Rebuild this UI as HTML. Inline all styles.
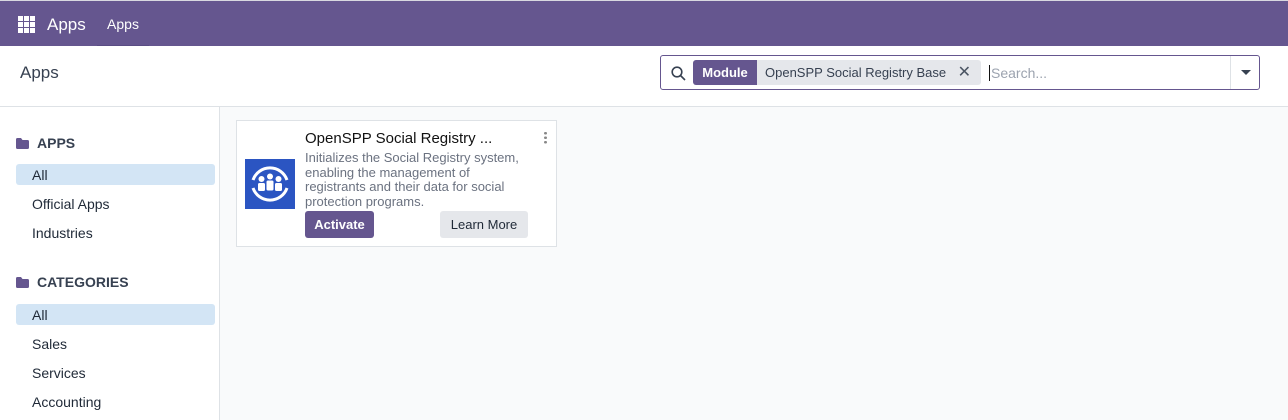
<!DOCTYPE html>
<html><head><meta charset="utf-8"><style>
*{box-sizing:border-box;margin:0;padding:0}
body{width:1288px;height:420px;overflow:hidden;font-family:"Liberation Sans",sans-serif;background:#f9fafb;color:#111827;position:relative}
.nav{position:absolute;left:0;top:0;width:1288px;height:46px;background:#65568f;border-top:1px solid #d8d8e0}
.nav .t{position:absolute;left:47px;top:14px;color:#fff;font-size:17px}
.nav .m{position:absolute;left:97px;top:0;width:52px;height:45px;color:#fff;font-size:14px;text-align:center;line-height:46px;border-bottom:1px solid #5a4c84}
.cp{position:absolute;left:0;top:46px;width:1288px;height:61px;background:#fff;border-bottom:1px solid #dee2e6}
.cp .t{position:absolute;left:20px;top:17px;font-size:17px;color:#374151}
.sb{position:absolute;left:660px;top:9px;width:600px;height:35px;border:1px solid #65568f;border-radius:3px;background:#fff}
.side{position:absolute;left:0;top:107px;width:220px;height:313px;background:#fff;border-right:1px solid #dee2e6}
.h{position:absolute;left:16px;font-weight:bold;font-size:14px;color:#374151}
.h svg{margin-right:8px;vertical-align:-1px}
.it{position:absolute;left:16px;width:199px;height:21px;padding-left:16px;font-size:14px;line-height:22px;color:#1f2937;border-radius:3px}
.sel{background:#d3e5f5}
.card{position:absolute;left:236px;top:120px;width:321px;height:127px;background:#fff;border:1px solid #dee2e6}
.btn{position:absolute;height:27px;font-size:13px;line-height:27px;text-align:center;border-radius:3px}
</style></head><body>
<div class="nav">
<svg style="position:absolute;left:18px;top:15px" width="17" height="17"><g fill="#fff"><rect x="0" y="0" width="5" height="5"/><rect x="6" y="0" width="5" height="5"/><rect x="12" y="0" width="5" height="5"/><rect x="0" y="6" width="5" height="5"/><rect x="6" y="6" width="5" height="5"/><rect x="12" y="6" width="5" height="5"/><rect x="0" y="12" width="5" height="5"/><rect x="6" y="12" width="5" height="5"/><rect x="12" y="12" width="5" height="5"/></g></svg>
<div class="t">Apps</div><div class="m">Apps</div></div>
<div class="cp"><div class="t">Apps</div>
<div class="sb">
<svg style="position:absolute;left:10px;top:10px" width="15" height="15"><circle cx="6" cy="6" r="4.8" stroke="#374151" stroke-width="1.6" fill="none"/><line x1="9.5" y1="9.5" x2="14" y2="14" stroke="#374151" stroke-width="1.6"/></svg>
<div style="position:absolute;left:32px;top:4px;height:25px;width:64px;background:#65568f;color:#fff;font-weight:bold;font-size:13px;line-height:25px;text-align:center;border-radius:3px 0 0 3px">Module</div>
<div style="position:absolute;left:96px;top:4px;height:25px;width:224px;background:#e5e7eb;color:#374151;font-size:13px;line-height:25px;padding-left:8px;border-radius:0 3px 3px 0">OpenSPP Social Registry Base<span style="position:absolute;right:10px;font-size:16px;color:#4b5563">✕</span></div>
<div style="position:absolute;left:328px;top:9px;width:1px;height:16px;background:#111"></div>
<div style="position:absolute;left:330px;top:9px;font-size:14px;color:#9ca3af">Search...</div>
<div style="position:absolute;left:569px;top:0;width:1px;height:33px;background:#dee2e6"></div>
<div style="position:absolute;left:580px;top:14px;border-left:5px solid transparent;border-right:5px solid transparent;border-top:5px solid #374151"></div>
</div></div>
<div class="side">
<div class="h" style="top:28px"><svg width="13" height="11"><path d="M0 1.5Q0 0 1.5 0H5L6.5 2H11.5Q13 2 13 3.5V9.5Q13 11 11.5 11H1.5Q0 11 0 9.5Z" fill="#65568f"/></svg>APPS</div>
<div class="it sel" style="top:57px">All</div>
<div class="it" style="top:86px">Official Apps</div>
<div class="it" style="top:115px">Industries</div>
<div class="h" style="top:167px"><svg width="13" height="11"><path d="M0 1.5Q0 0 1.5 0H5L6.5 2H11.5Q13 2 13 3.5V9.5Q13 11 11.5 11H1.5Q0 11 0 9.5Z" fill="#65568f"/></svg>CATEGORIES</div>
<div class="it sel" style="top:197px">All</div>
<div class="it" style="top:226px">Sales</div>
<div class="it" style="top:255px">Services</div>
<div class="it" style="top:284px">Accounting</div>
</div>
<div class="card">
<svg style="position:absolute;left:8px;top:38px" width="50" height="50"><rect width="50" height="50" fill="#2b55c2"/><path d="M8 21 A18 18 0 0 1 42 21 M8 29 A18 18 0 0 0 42 29" stroke="#fff" stroke-width="3" fill="none"/><g fill="#fff"><circle cx="16.5" cy="20" r="3"/><circle cx="25" cy="17.5" r="3"/><circle cx="33.5" cy="20" r="3"/><rect x="13" y="24" width="7" height="8" rx="1.5"/><rect x="21.5" y="21.5" width="7" height="10" rx="1.5"/><rect x="30" y="24" width="7" height="8" rx="1.5"/></g></svg>
<div style="position:absolute;left:68px;top:9px;font-size:15px;color:#111">OpenSPP Social Registry ...</div>
<div style="position:absolute;right:9px;top:10px;width:3px;height:13px;background:radial-gradient(circle,#888 1.3px,transparent 1.5px) 0 0/3px 4.5px"></div>
<div style="position:absolute;left:68px;top:30px;width:226px;font-size:13px;line-height:14.5px;color:#6b7280">Initializes the Social Registry system, enabling the management of registrants and their data for social protection programs.</div>
<div class="btn" style="left:68px;top:90px;width:69px;background:#65568f;color:#fff;font-weight:bold">Activate</div>
<div class="btn" style="left:203px;top:90px;width:88px;background:#e5e7eb;color:#1f2937">Learn More</div>
</div>
</body></html>
